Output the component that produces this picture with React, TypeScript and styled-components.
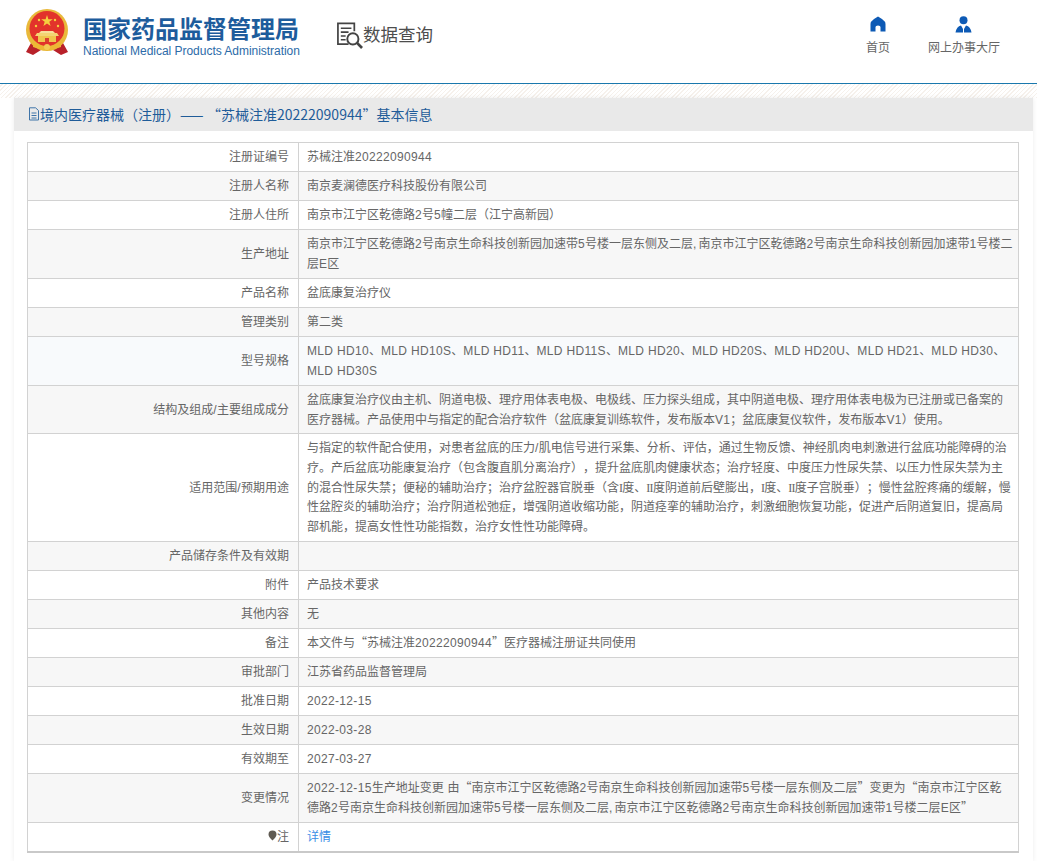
import React from "react";
import styled, { createGlobalStyle } from "styled-components";

const GlobalStyle = createGlobalStyle`
  html, body {
    margin: 0;
    padding: 0;
    background: #fff;
    font-family: "Noto Sans CJK SC", "Liberation Sans", sans-serif;
    font-size: 12px;
    color: #666;
    text-spacing-trim: space-all;
  }
`;

const GREY = "#f7f7f7";
const PALE_BLUE = "#f8fafc";

const rows: { label: string; value: string; tone?: string; height?: number; link?: boolean; note?: boolean }[] = [
  { label: "注册证编号", value: "苏械注准20222090944" },
  { label: "注册人名称", value: "南京麦澜德医疗科技股份有限公司", tone: GREY },
  { label: "注册人住所", value: "南京市江宁区乾德路2号5幢二层（江宁高新园）" },
  {
    label: "生产地址",
    value:
      "南京市江宁区乾德路2号南京生命科技创新园加速带5号楼一层东侧及二层, 南京市江宁区乾德路2号南京生命科技创新园加速带1号楼二层E区",
    tone: GREY,
    height: 49,
  },
  { label: "产品名称", value: "盆底康复治疗仪" },
  { label: "管理类别", value: "第二类", tone: GREY },
  {
    label: "型号规格",
    value:
      "MLD HD10、MLD HD10S、MLD HD11、MLD HD11S、MLD HD20、MLD HD20S、MLD HD20U、MLD HD21、MLD HD30、MLD HD30S",
    tone: PALE_BLUE,
    height: 49,
  },
  {
    label: "结构及组成/主要组成成分",
    value:
      "盆底康复治疗仪由主机、阴道电极、理疗用体表电极、电极线、压力探头组成，其中阴道电极、理疗用体表电极为已注册或已备案的医疗器械。产品使用中与指定的配合治疗软件（盆底康复训练软件，发布版本V1；盆底康复仪软件，发布版本V1）使用。",
    tone: GREY,
    height: 48,
  },
  {
    label: "适用范围/预期用途",
    value:
      "与指定的软件配合使用，对患者盆底的压力/肌电信号进行采集、分析、评估，通过生物反馈、神经肌肉电刺激进行盆底功能障碍的治疗。产后盆底功能康复治疗（包含腹直肌分离治疗），提升盆底肌肉健康状态；治疗轻度、中度压力性尿失禁、以压力性尿失禁为主的混合性尿失禁；便秘的辅助治疗；治疗盆腔器官脱垂（含I度、II度阴道前后壁膨出，I度、II度子宫脱垂）；慢性盆腔疼痛的缓解，慢性盆腔炎的辅助治疗；治疗阴道松弛症，增强阴道收缩功能，阴道痉挛的辅助治疗，刺激细胞恢复功能，促进产后阴道复旧，提高局部机能，提高女性性功能指数，治疗女性性功能障碍。",
    height: 108,
  },
  { label: "产品储存条件及有效期", value: "", tone: GREY },
  { label: "附件", value: "产品技术要求" },
  { label: "其他内容", value: "无", tone: GREY },
  { label: "备注", value: "本文件与“苏械注准20222090944”医疗器械注册证共同使用" },
  { label: "审批部门", value: "江苏省药品监督管理局", tone: GREY },
  { label: "批准日期", value: "2022-12-15" },
  { label: "生效日期", value: "2022-03-28", tone: GREY },
  { label: "有效期至", value: "2027-03-27" },
  {
    label: "变更情况",
    value:
      "2022-12-15生产地址变更 由“南京市江宁区乾德路2号南京生命科技创新园加速带5号楼一层东侧及二层”变更为“南京市江宁区乾德路2号南京生命科技创新园加速带5号楼一层东侧及二层, 南京市江宁区乾德路2号南京生命科技创新园加速带1号楼二层E区”",
    tone: GREY,
    height: 49,
  },
  { label: "注", value: "详情", link: true, note: true },
];

const Latin = styled.span`
  font-family: "Liberation Sans", sans-serif;
  line-height: 1;
  letter-spacing: 0.33px;
`;

const Numeral = styled.span`
  font-family: "Liberation Serif", serif;
  line-height: 1;
  letter-spacing: -0.7px;
`;

const Separator = styled(Latin)`
  letter-spacing: -0.6px;
`;

// latin runs get their own font, the page's latin glyphs are wider than the cjk font's
const renderText = (text: string) =>
  text.split(/(I+(?=度)|, |[A-Za-z0-9 .\/-]+)/).map((part, i) => {
    if (i % 2 === 0) return part;
    if (/^I+$/.test(part)) return <Numeral key={i}>{part}</Numeral>;
    if (part === ", ") return <Separator key={i}>{part}</Separator>;
    return <Latin key={i}>{part}</Latin>;
  });

const Emblem = () => (
  <svg width="44" height="47" viewBox="0 0 44 47" aria-hidden="true">
    <path d="M6 34 L1 43 L8 46 L16 41 L28 41 L36 46 L43 43 L38 34 Z" fill="#b8212a" />
    <circle cx="22" cy="21" r="21" fill="#e9b93a" />
    <circle cx="22" cy="19.5" r="17.5" fill="#e2332b" />
    <polygon
      points="22,6 23.4,10.2 27.8,10.2 24.3,12.8 25.6,17 22,14.4 18.4,17 19.7,12.8 16.2,10.2 20.6,10.2"
      fill="#f5d13f"
    />
    <circle cx="14" cy="11" r="1.2" fill="#f5d13f" />
    <circle cx="30" cy="11" r="1.2" fill="#f5d13f" />
    <circle cx="11" cy="17" r="1.2" fill="#f5d13f" />
    <circle cx="33" cy="17" r="1.2" fill="#f5d13f" />
    <path d="M12 24 L32 24 L34 27 L10 27 Z" fill="#f3d573" />
    <rect x="13" y="27" width="18" height="6" fill="#f0c64e" />
    <path d="M16 22 H28 L30 24 H14 Z" fill="#f7e09a" />
    <rect x="20" y="29" width="4" height="4" fill="#d9402f" />
    <path d="M8 33 Q22 42 36 33 L36 38 Q22 44 8 38 Z" fill="#eeb734" />
    <circle cx="22" cy="38" r="3" fill="#f3cb55" />
  </svg>
);

const SearchDocIcon = () => (
  <svg width="27" height="29" viewBox="0 0 28 29" fill="none" stroke="#444" aria-hidden="true">
    <path d="M13 23.5 H2 V2 H19 V10" strokeWidth="1.8" />
    <path d="M5 7 H16 M5 11 H13 M5 15 H10 M5 19 H10" strokeWidth="1.6" />
    <circle cx="17.5" cy="18" r="5.8" strokeWidth="2" />
    <path d="M21.8 22.2 L27 27.5" strokeWidth="2.8" />
  </svg>
);

const HomeIcon = () => (
  <svg width="16" height="16" viewBox="0 0 16 16" aria-hidden="true">
    <path
      d="M8 0.5 L12 3 Q15.5 5.5 15.5 8 V15.5 H10.5 V11 Q10.5 9.5 8 9.5 Q5.5 9.5 5.5 11 V15.5 H0.5 V8 Q0.5 5.5 4 3 Z"
      fill="#0d5ab5"
    />
  </svg>
);

const UserIcon = () => (
  <svg width="17" height="17" viewBox="0 0 17 17" aria-hidden="true">
    <circle cx="8.5" cy="4.3" r="4" fill="#0d5ab5" />
    <path d="M0.5 16.5 Q1.5 10.5 6 9.5 L8 13 L8 16.5 Z" fill="#0d5ab5" />
    <path d="M16.5 16.5 Q15.5 10.5 11 9.5 L9 13 L9 16.5 Z" fill="#0d5ab5" />
  </svg>
);

const DocIcon = () => (
  <svg width="12" height="14" viewBox="0 0 12 14" fill="none" stroke="#3f74a8" aria-hidden="true">
    <path d="M1.5 0.8 H7.5 L10.5 3.5 V13 H1.5 Z" />
    <path d="M3.5 6 H8.5 M3.5 8.5 H8.5 M3.5 11 H8.5" />
  </svg>
);

const NoteDot = () => (
  <svg width="9" height="11" viewBox="0 0 9 11" aria-hidden="true">
    <path d="M4.5 0.5 A4 4 0 0 1 8.5 4.5 Q8.5 7 4.5 10.5 Q0.5 7 0.5 4.5 A4 4 0 0 1 4.5 0.5 Z" fill="#5f5a52" />
  </svg>
);

const Header = styled.header`
  display: flex;
  align-items: flex-start;
  height: 83px;
  border-bottom: 1px solid #1a78ad;
  padding-left: 25px;
`;

const Logo = styled.div`
  display: flex;
  gap: 14px;
  padding-top: 9px;
`;

const LogoText = styled.div`
  display: flex;
  flex-direction: column;
  padding-top: 4px;
`;

const LogoTitle = styled.div`
  font-size: 24px;
  line-height: 30px;
  font-weight: 700;
  color: #1d5c9c;
  white-space: nowrap;
`;

const LogoEnglish = styled.div`
  font-family: "Liberation Sans", sans-serif;
  font-size: 12px;
  line-height: 15px;
  margin-top: 1px;
  letter-spacing: -0.03px;
  color: #2c6ba8;
  white-space: nowrap;
`;

const QueryTitle = styled.div`
  display: flex;
  align-items: flex-start;
  margin: 21px 0 0 36px;
  color: #4d4d4d;
  white-space: nowrap;
`;

const QueryText = styled.span`
  font-size: 17.5px;
  line-height: 26px;
`;

const Nav = styled.nav`
  display: flex;
  margin-left: auto;
  padding: 16px 37px 0 0;
  gap: 38px;
`;

const NavItem = styled.a`
  display: flex;
  flex-direction: column;
  align-items: center;
  gap: 6px;
  color: #666;
  font-size: 12px;
  line-height: 16px;
`;

const IconSlot = styled.span`
  display: flex;
  height: 17px;
`;

const Stripes = styled.div`
  height: 14px;
  background: repeating-linear-gradient(-45deg, #f6f1ec 0 1px, #fff 1px 3px);
`;

const Panel = styled.section`
  margin: 0 4px 0 14px;
  padding-bottom: 8px;
  box-shadow: 0 0 5px rgba(0, 0, 0, 0.08);
`;

const PanelTitle = styled.h2`
  display: flex;
  align-items: center;
  box-sizing: border-box;
  margin: 0;
  height: 33px;
  padding: 0 0 2px 14px;
  background: #e9e9e9;
  font-size: 14px;
  font-weight: 400;
  color: #1f5c99;
  white-space: nowrap;
`;

const Dash = styled.span`
  letter-spacing: 3.5px;
`;

const Table = styled.table`
  width: 992px;
  margin: 11px 0 0 13px;
  border-collapse: collapse;
  table-layout: fixed;
  border: 1px solid #c9c9c9;
  border-bottom-width: 2px;
`;

const Row = styled.tr<{ $tone?: string; $height?: number }>`
  height: ${({ $height }) => $height ?? 29}px;
  background: ${({ $tone }) => $tone ?? "#fff"};
`;

const Label = styled.td`
  box-sizing: border-box;
  width: 271px;
  padding: 2px 9px 4px 0;
  border: 1px solid #d2d2d2;
  text-align: right;
  line-height: 19.8px;
`;

const Value = styled.td`
  padding: 2px 5px 4px 8px;
  border: 1px solid #d2d2d2;
  line-height: 19.8px;
`;

const Link = styled.a`
  color: #3a8ee6;
`;

export default function App() {
  return (
    <>
      <GlobalStyle />
      <Header>
        <Logo>
          <Emblem />
          <LogoText>
            <LogoTitle>国家药品监督管理局</LogoTitle>
            <LogoEnglish>National Medical Products Administration</LogoEnglish>
          </LogoText>
        </Logo>
        <QueryTitle>
          <SearchDocIcon />
          <QueryText>数据查询</QueryText>
        </QueryTitle>
        <Nav>
          <NavItem>
            <IconSlot>
              <HomeIcon />
            </IconSlot>
            首页
          </NavItem>
          <NavItem>
            <IconSlot>
              <UserIcon />
            </IconSlot>
            网上办事大厅
          </NavItem>
        </Nav>
      </Header>
      <Stripes />
      <Panel>
        <PanelTitle>
          <DocIcon />
          <span>
            境内医疗器械（注册）<Dash>——</Dash>“苏械注准20222090944”基本信息
          </span>
        </PanelTitle>
        <Table>
          <tbody>
            {rows.map((row) => (
              <Row key={row.label} $tone={row.tone} $height={row.height}>
                <Label>
                  {row.note && <NoteDot />}
                  {renderText(row.label)}
                </Label>
                <Value>{row.link ? <Link>{row.value}</Link> : renderText(row.value)}</Value>
              </Row>
            ))}
          </tbody>
        </Table>
      </Panel>
    </>
  );
}
